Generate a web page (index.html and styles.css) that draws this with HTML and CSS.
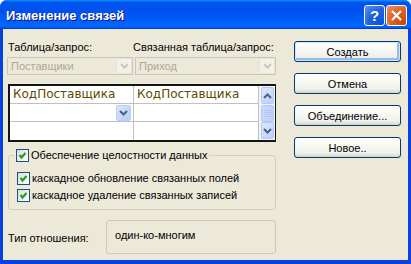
FILE: index.html
```html
<!DOCTYPE html>
<html>
<head>
    <title>Изменение связей</title>
    <link rel="stylesheet" href="styles.css">
</head>
<body>
    <div class="window">
        <div class="titlebar">
            <span class="title">Изменение связей</span>
            <div class="caption-buttons">
                <span class="cap-btn help">?</span>
                <span class="cap-btn close">
                    <svg width="19" height="19" viewBox="0 0 19 19"><path d="M5 5 L14 14 M14 5 L5 14" stroke="#fff" stroke-width="2.2" fill="none"/></svg>
                </span>
            </div>
        </div>

        <div class="client">
            <div class="left">
                <div class="combos">
                    <div class="field">
                        <label class="label">Таблица/запрос:</label>
                        <div class="combo">
                            <span class="combo-text">Поставщики</span>
                            <span class="drop">
                                <svg width="9" height="6" viewBox="0 0 9 6"><polyline points="1,1 4.5,4.5 8,1" stroke="#c9c7ba" stroke-width="2" fill="none"/></svg>
                            </span>
                        </div>
                    </div>
                    <div class="field">
                        <label class="label label-second">Связанная таблица/запрос:</label>
                        <div class="combo">
                            <span class="combo-text">Приход</span>
                            <span class="drop">
                                <svg width="9" height="6" viewBox="0 0 9 6"><polyline points="1,1 4.5,4.5 8,1" stroke="#c9c7ba" stroke-width="2" fill="none"/></svg>
                            </span>
                        </div>
                    </div>
                </div>

                <div class="fields-grid">
                    <div class="cell">КодПоставщика</div>
                    <div class="cell">КодПоставщика</div>
                    <div class="scrollbar">
                        <span class="sb-btn">
                            <svg width="9" height="6" viewBox="0 0 9 6"><polyline points="1,5 4.5,1.5 8,5" stroke="#4d6185" stroke-width="2" fill="none"/></svg>
                        </span>
                        <span class="sb-thumb">
                            <svg width="8" height="7" viewBox="0 0 8 7"><path d="M0 0.5 H8 M0 2.5 H8 M0 4.5 H8 M0 6.5 H8" stroke="#b4c8f6" stroke-width="1"/></svg>
                        </span>
                        <span class="sb-btn">
                            <svg width="9" height="6" viewBox="0 0 9 6"><polyline points="1,1 4.5,4.5 8,1" stroke="#4d6185" stroke-width="2" fill="none"/></svg>
                        </span>
                    </div>
                    <div class="cell cell-combo">
                        <span class="cell-drop">
                            <svg width="9" height="6" viewBox="0 0 9 6"><polyline points="1,1 4.5,4.5 8,1" stroke="#4d6185" stroke-width="2" fill="none"/></svg>
                        </span>
                    </div>
                    <div class="cell"></div>
                    <div class="cell"></div>
                    <div class="cell"></div>
                </div>

                <fieldset class="group">
                    <legend class="check-row">
                        <span class="checkbox"><svg width="11" height="11" viewBox="0 0 11 11"><polyline points="2.5,5 4.5,7.5 8.5,3" stroke="#21a121" stroke-width="2.2" fill="none"/></svg></span>
                        Обеспечение целостности данных
                    </legend>
                    <div class="check-row">
                        <span class="checkbox"><svg width="11" height="11" viewBox="0 0 11 11"><polyline points="2.5,5 4.5,7.5 8.5,3" stroke="#21a121" stroke-width="2.2" fill="none"/></svg></span>
                        каскадное обновление связанных полей
                    </div>
                    <div class="check-row">
                        <span class="checkbox"><svg width="11" height="11" viewBox="0 0 11 11"><polyline points="2.5,5 4.5,7.5 8.5,3" stroke="#21a121" stroke-width="2.2" fill="none"/></svg></span>
                        каскадное удаление связанных записей
                    </div>
                </fieldset>

                <div class="type-row">
                    <span class="type-label">Тип отношения:</span>
                    <div class="type-box">один-ко-многим</div>
                </div>
            </div>

            <div class="buttons">
                <button class="btn default">Создать</button>
                <button class="btn">Отмена</button>
                <button class="btn">Объединение...</button>
                <button class="btn">Новое..</button>
            </div>
        </div>
    </div>
</body>
</html>
```

FILE: styles.css
```css
body {
    margin: 0;
    background: #fff;
    font-family: "Liberation Sans", Arial, sans-serif;
    font-size: 11px;
    color: #000;
}
.window {
    width: 411px;
    height: 264px;
    display: flex;
    flex-direction: column;
    background: #0842dd;
    border-radius: 7px 7px 0 0;
    overflow: hidden;
}
.titlebar {
    height: 29px;
    flex: none;
    display: flex;
    align-items: center;
    justify-content: space-between;
    padding: 0 4px 0 6px;
    background: linear-gradient(180deg, #0997ff, #0053ee 8%, #0050ee 40%, #0066ff 88%, #0066ff 93%, #005bff 95%, #003dd7 96%, #003dd7);
}
.title {
    color: #fff;
    font-weight: bold;
    font-size: 13px;
    text-shadow: 1px 1px #0f1089;
    padding-top: 2px;
}
.caption-buttons {
    display: flex;
    gap: 1px;
    padding-top: 2px;
}
.cap-btn {
    width: 19px;
    height: 19px;
    border: 1px solid #fff;
    border-radius: 3px;
    display: flex;
    align-items: center;
    justify-content: center;
    color: #fff;
    font-weight: bold;
    font-size: 15px;
}
.help {
    background: radial-gradient(circle at 90% 90%, #0054e9 0%, #2263d5 55%, #4480f0 80%, #5b95f8 100%);
}
.close {
    background: radial-gradient(circle at 90% 90%, #cc4600 0%, #dc6527 55%, #e07e52 80%, #e59b7c 100%);
}
.client {
    flex: 1;
    margin: 0 3px 4px 3px;
    background: #ece9d8;
    display: flex;
    padding: 12px 0 0 4px;
}
.left {
    width: 269px;
    display: flex;
    flex-direction: column;
}
.combos {
    display: grid;
    grid-template-columns: 126px 1fr;
    column-gap: 2px;
}
.label {
    display: block;
    height: 13px;
    line-height: 13px;
    padding-left: 1px;
    white-space: nowrap;
}
.label-second {
    margin-left: -2px;
    padding-left: 0;
}
.combo {
    margin-top: 3px;
    height: 16px;
    border: 1px solid #c9c7ba;
    display: flex;
    align-items: center;
    justify-content: space-between;
    padding: 0 1px 0 3px;
}
.combo-text {
    color: #aca899;
}
.drop {
    width: 14px;
    height: 14px;
    border: 1px solid #e6e3d5;
    border-radius: 2px;
    background: #f3f1ea;
    display: flex;
    align-items: center;
    justify-content: center;
    margin-right: -1px;
}
.fields-grid {
    margin: 9px 0 0 1px;
    border: 2px solid #141414;
    display: grid;
    grid-template-columns: 123px 124px 16px;
    grid-template-rows: 17px 17px 18px;
    gap: 1px;
    background: #c0c0c0;
}
.cell {
    background: #fff;
    padding-left: 3px;
    line-height: 17px;
    color: #5c4a00;
    font-family: "DejaVu Sans", sans-serif;
    font-size: 12px;
    white-space: nowrap;
    overflow: hidden;
}
.cell-combo {
    display: flex;
    justify-content: flex-end;
    align-items: center;
    padding-right: 2px;
}
.cell-drop {
    width: 13px;
    height: 14px;
    border: 1px solid #b9cdf6;
    border-radius: 2px;
    background: linear-gradient(135deg, #dbe6fd, #b6cbf8);
    display: flex;
    align-items: center;
    justify-content: center;
}
.scrollbar {
    grid-column: 3;
    grid-row: 1 / span 3;
    background: #f3f3f8;
    display: flex;
    flex-direction: column;
    justify-content: space-between;
    padding: 1px 1px 1px 2px;
}
.sb-btn,
.sb-thumb {
    height: 15px;
    border: 1px solid #b4c8f6;
    border-radius: 2px;
    background: linear-gradient(135deg, #dfe8fd, #bccffa);
    display: flex;
    align-items: center;
    justify-content: center;
}
.sb-thumb {
    background: linear-gradient(90deg, #c9d8fc, #bcd0fa);
}
.group {
    margin: 7px 0 0 1px;
    padding: 0 0 7px 8px;
    border: 1px solid #d0d0bf;
    border-radius: 3px;
    display: flex;
    flex-direction: column;
    gap: 4px;
}
.group legend {
    margin-left: -3px;
    padding: 0 2px;
}
.check-row {
    height: 13px;
    line-height: 13px;
    display: flex;
    align-items: center;
    gap: 2px;
    white-space: nowrap;
}
.group > div.check-row:first-of-type {
    margin-top: 10px;
}
.checkbox {
    width: 11px;
    height: 11px;
    border: 1px solid #1c5180;
    background: linear-gradient(135deg, #dcdcd7, #fff);
    display: flex;
}
.type-row {
    margin: 10px 0 0 1px;
    display: flex;
    align-items: center;
}
.type-label {
    width: 98px;
    padding-top: 2px;
}
.type-box {
    flex: 1;
    height: 24px;
    border: 1px solid #cdcab9;
    border-radius: 3px;
    padding: 8px 0 0 8px;
    line-height: 13px;
}
.buttons {
    margin-left: 18px;
    width: 107px;
    display: flex;
    flex-direction: column;
    gap: 11px;
}
.btn {
    height: 21px;
    border: 1px solid #003c74;
    border-radius: 3px;
    background: linear-gradient(180deg, #fff, #f0f0ea 80%, #d6d0c5);
    font-family: "Liberation Sans", Arial, sans-serif;
    font-size: 11px;
    color: #000;
    padding: 0;
}
.btn.default {
    box-shadow: inset 0 0 0 1px #cee7ff, inset -1px -1px 0 2px #98b8ea;
}
```
